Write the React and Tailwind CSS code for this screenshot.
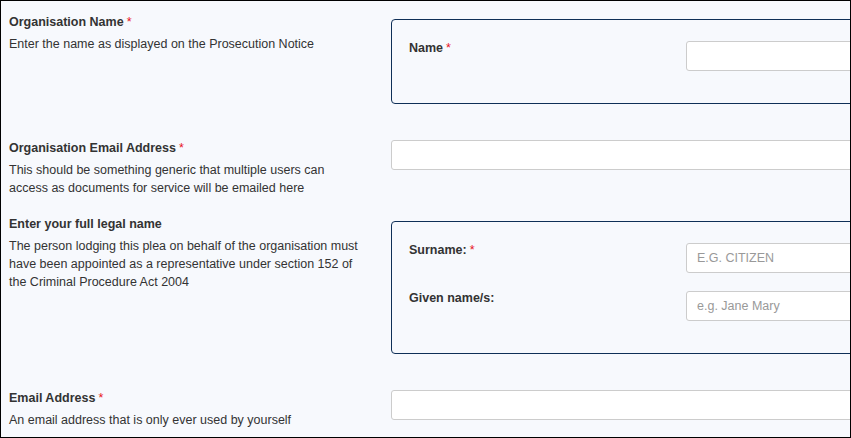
import React from "react";

function Req() {
  return <span className="ml-[3px] font-normal text-[#e8121b]">*</span>;
}

function TextInput({ placeholder, className = "" }) {
  return (
    <input
      type="text"
      placeholder={placeholder}
      className={`h-[30px] rounded-[3px] border border-[#cccccc] bg-white px-[10px] text-[12.5px] text-[#333] placeholder:text-[#999] outline-none ${className}`}
    />
  );
}

function FieldRow({ label, required, description, children }) {
  return (
    <div className="mb-[18px] flex">
      <div className="w-[382px] shrink-0 pr-[28px]">
        <div className="font-bold leading-[18px]">
          {label}
          {required && <Req />}
        </div>
        {description && <p className="mt-[4px] leading-[18px]">{description}</p>}
      </div>
      <div className="flex-1">{children}</div>
    </div>
  );
}

function InnerRow({ label, required, placeholder }) {
  return (
    <div className="mb-[16px] flex">
      <div className="w-[277px] shrink-0 font-bold leading-[18px]">
        {label}
        {required && <Req />}
      </div>
      <TextInput placeholder={placeholder} className="mt-[2px] w-[300px]" />
    </div>
  );
}

function GroupBox({ children }) {
  return (
    <div className="mt-[6px] mb-[17px] w-[640px] rounded-[4px] border border-[#0f2f57] px-[17px] pt-[19px] pb-[16px]">
      {children}
    </div>
  );
}

export default function App() {
  return (
    <div
      className="h-[438px] w-[851px] overflow-hidden border border-black bg-[#f7f9fd] pl-[8px] pt-[12px] text-[12.5px] text-[#333]"
      style={{ fontFamily: '"Liberation Sans", Arial, sans-serif' }}
    >
      <div className="w-[1000px]">
        <FieldRow
          label="Organisation Name"
          required
          description="Enter the name as displayed on the Prosecution Notice"
        >
          <GroupBox>
            <InnerRow label="Name" required />
          </GroupBox>
        </FieldRow>

        <FieldRow
          label="Organisation Email Address"
          required
          description="This should be something generic that multiple users can access as documents for service will be emailed here"
        >
          <TextInput className="mt-[1px] w-[600px]" />
        </FieldRow>

        <FieldRow
          label="Enter your full legal name"
          description="The person lodging this plea on behalf of the organisation must have been appointed as a representative under section 152 of the Criminal Procedure Act 2004"
        >
          <GroupBox>
            <InnerRow label="Surname:" required placeholder="E.G. CITIZEN" />
            <InnerRow label="Given name/s:" placeholder="e.g. Jane Mary" />
          </GroupBox>
        </FieldRow>

        <FieldRow
          label="Email Address"
          required
          description="An email address that is only ever used by yourself"
        >
          <TextInput className="mt-[1px] w-[600px]" />
        </FieldRow>
      </div>
    </div>
  );
}
